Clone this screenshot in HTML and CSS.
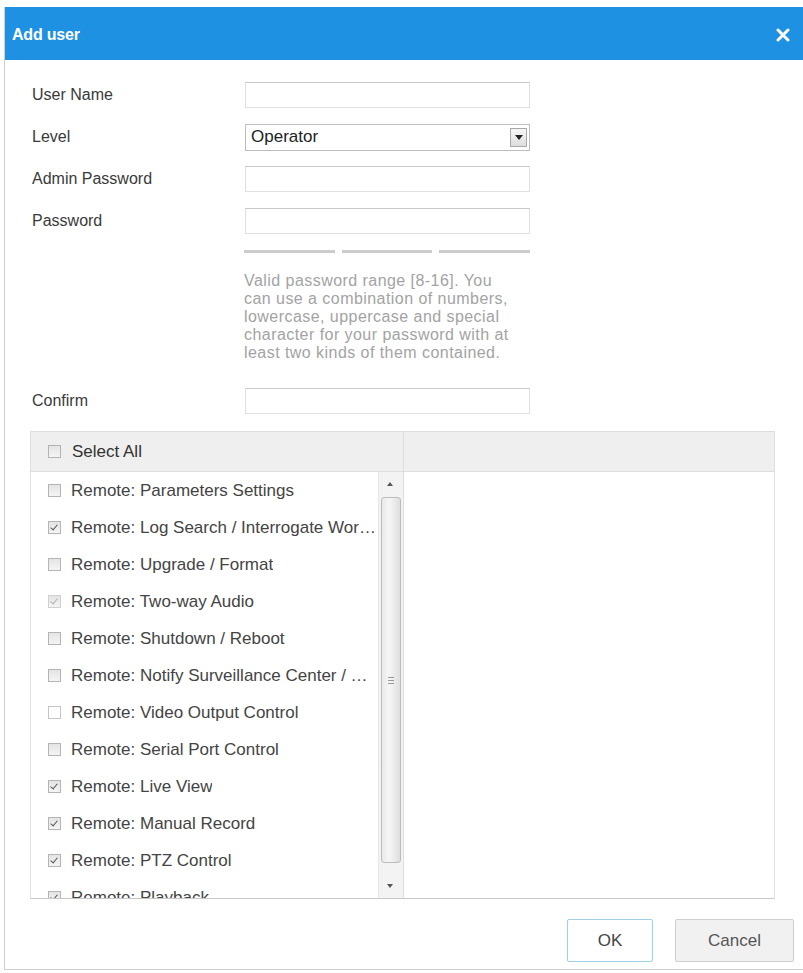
FILE: index.html
```html
<!DOCTYPE html>
<html lang="en">
<head>
    <meta charset="UTF-8">
    <meta name="viewport" content="width=device-width, initial-scale=1.0">
    <title>Add user</title>
    <link rel="stylesheet" href="styles.css">
</head>
<body>
    <div class="dialog">
        <div class="header">
            <span class="title">Add user</span>
            <svg class="close" width="14" height="14" viewBox="0 0 14 14">
                <path d="M2 2 L12 12 M12 2 L2 12" stroke="#fff" stroke-width="3" stroke-linecap="round"/>
            </svg>
        </div>

        <div class="form">
            <div class="row">
                <label>User Name</label>
                <div class="field"></div>
            </div>
            <div class="row">
                <label>Level</label>
                <div class="field select">
                    <span>Operator</span>
                    <span class="arrow"><svg width="8" height="5" viewBox="0 0 8 5"><path d="M0 0 H8 L4 5 Z" fill="#222"/></svg></span>
                </div>
            </div>
            <div class="row">
                <label>Admin Password</label>
                <div class="field"></div>
            </div>
            <div class="row">
                <label>Password</label>
                <div class="field"></div>
            </div>
            <div class="strength">
                <span></span><span></span><span></span>
            </div>
            <p class="hint">Valid password range [8-16]. You can use a combination of numbers, lowercase, uppercase and special character for your password with at least two kinds of them contained.</p>
            <div class="row">
                <label>Confirm</label>
                <div class="field"></div>
            </div>
        </div>

        <div class="perms">
            <div class="perms-head">
                <div class="head-left"><span class="cb"></span>Select All</div>
                <div class="head-right"></div>
            </div>
            <div class="perms-body">
                <div class="list-wrap">
                    <ul class="list">
                        <li><span class="cb"></span><span class="txt">Remote: Parameters Settings</span></li>
                        <li><span class="cb checked"></span><span class="txt">Remote: Log Search / Interrogate Working Status</span></li>
                        <li><span class="cb"></span><span class="txt">Remote: Upgrade / Format</span></li>
                        <li><span class="cb checked disabled"></span><span class="txt">Remote: Two-way Audio</span></li>
                        <li><span class="cb"></span><span class="txt">Remote: Shutdown / Reboot</span></li>
                        <li><span class="cb"></span><span class="txt">Remote: Notify Surveillance Center / Trigger Alarm Output</span></li>
                        <li><span class="cb blank"></span><span class="txt">Remote: Video Output Control</span></li>
                        <li><span class="cb"></span><span class="txt">Remote: Serial Port Control</span></li>
                        <li><span class="cb checked"></span><span class="txt">Remote: Live View</span></li>
                        <li><span class="cb checked"></span><span class="txt">Remote: Manual Record</span></li>
                        <li><span class="cb checked"></span><span class="txt">Remote: PTZ Control</span></li>
                        <li><span class="cb checked"></span><span class="txt">Remote: Playback</span></li>
                    </ul>
                    <div class="scrollbar">
                        <span class="sb-arrow up"></span>
                        <div class="thumb"><span class="grip"></span></div>
                        <span class="sb-arrow down"></span>
                    </div>
                </div>
                <div class="channels"></div>
            </div>
        </div>

        <div class="footer">
            <button class="btn ok">OK</button>
            <button class="btn cancel">Cancel</button>
        </div>
    </div>
</body>
</html>
```

FILE: styles.css
```css
body {
    margin: 0;
    font-family: "Liberation Sans", Arial, sans-serif;
    background: #fff;
    color: #333;
}
.dialog {
    margin: 7px 0 0 4px;
    height: 963px;
    box-sizing: border-box;
    border-left: 1px solid #cfcfcf;
    border-bottom: 1px solid #cfcfcf;
    display: flex;
    flex-direction: column;
}
.header {
    height: 53px;
    flex: none;
    background: #1e91e3;
    display: flex;
    align-items: center;
    justify-content: space-between;
    padding: 2px 13px 0 7px;
    box-sizing: border-box;
}
.title {
    color: #fff;
    font-weight: bold;
    font-size: 16px;
    letter-spacing: -0.2px;
}
.form {
    padding: 22px 0 0 27px;
}
.row {
    display: flex;
    align-items: center;
    height: 26px;
    margin-bottom: 16px;
}
.row label {
    width: 213px;
    font-size: 16px;
    color: #3a3a3a;
}
.field {
    width: 285px;
    height: 26px;
    box-sizing: border-box;
    border: 1px solid #e0e0e0;
    border-top-color: #c8c8c8;
    background: #fff;
}
.select {
    display: flex;
    align-items: center;
    justify-content: space-between;
    padding: 0 2px 0 5px;
    border-color: #bdbdbd;
    height: 27px;
    font-size: 17px;
    color: #222;
}
.arrow {
    width: 17px;
    height: 19px;
    box-sizing: border-box;
    border: 1px solid #a8a8a8;
    background: linear-gradient(#f6f6f6, #dedede);
    display: flex;
    align-items: center;
    justify-content: center;
}
.strength {
    display: flex;
    gap: 7px;
    width: 286px;
    margin: 6px 0 0 212px;
}
.strength span {
    flex: 1;
    height: 3px;
    background: #cccccc;
}
.hint {
    width: 274px;
    margin: 19px 0 26px 212px;
    font-size: 16px;
    line-height: 18px;
    letter-spacing: 0.45px;
    color: #a3a3a3;
}
.perms {
    margin: 1px 0 0 25px;
    width: 745px;
}
.perms-head {
    display: flex;
    height: 41px;
    box-sizing: border-box;
    background: #efefef;
    border: 1px solid #dedede;
}
.head-left {
    width: 373px;
    box-sizing: border-box;
    border-right: 1px solid #dedede;
    display: flex;
    align-items: center;
    padding-left: 17px;
    font-size: 17px;
    color: #333;
}
.head-right {
    flex: 1;
}
.perms-body {
    display: flex;
    height: 427px;
    box-sizing: border-box;
    border-left: 1px solid #e2e2e2;
    border-right: 1px solid #e2e2e2;
    border-bottom: 1px solid #c8c8c8;
}
.list-wrap {
    width: 372px;
    display: flex;
    border-right: 1px solid #dedede;
    overflow: hidden;
}
.list {
    list-style: none;
    margin: 0;
    padding: 0;
    width: 347px;
}
.list li {
    height: 37px;
    display: flex;
    align-items: center;
    padding-left: 17px;
    padding-right: 2px;
    font-size: 17px;
    color: #444;
}
.txt {
    min-width: 0;
    white-space: nowrap;
    overflow: hidden;
    text-overflow: ellipsis;
}
.cb {
    flex: none;
    width: 11px;
    height: 11px;
    margin-right: 10px;
    border: 1px solid #b4b4b4;
    background: linear-gradient(#e4e4e4, #f4f4f4);
    position: relative;
}
.cb.blank {
    background: #fff;
    border-color: #c6c6c6;
}
.cb.checked::after {
    content: "";
    position: absolute;
    left: 3px;
    top: 1px;
    width: 3px;
    height: 6px;
    border: solid #555;
    border-width: 0 1.5px 1.5px 0;
    transform: rotate(40deg);
}
.cb.disabled {
    border-color: #d0d0d0;
}
.cb.disabled::after {
    border-color: #b0b0b0;
}
.head-left .cb {
    margin-right: 11px;
}
.scrollbar {
    width: 24px;
    flex: none;
    background: #f3f3f3;
    border-left: 1px solid #e6e6e6;
    display: flex;
    flex-direction: column;
    align-items: center;
}
.sb-arrow {
    height: 25px;
    width: 100%;
    position: relative;
}
.sb-arrow::after {
    content: "";
    position: absolute;
    left: 8px;
    border-left: 3px solid transparent;
    border-right: 3px solid transparent;
}
.sb-arrow.up::after {
    top: 10px;
    border-bottom: 4px solid #555;
}
.sb-arrow.down::after {
    top: 11px;
    border-top: 4px solid #555;
}
.thumb {
    flex: 1;
    width: 20px;
    box-sizing: border-box;
    margin-bottom: 10px;
    border: 1px solid #bcbcbc;
    border-radius: 3px;
    background: linear-gradient(90deg, #e9e9e9, #f6f6f6 40%, #dedede);
    display: flex;
    align-items: center;
    justify-content: center;
}
.grip {
    width: 6px;
    height: 5px;
    border-top: 1px solid #999;
    border-bottom: 1px solid #999;
    position: relative;
}
.grip::after {
    content: "";
    position: absolute;
    left: 0;
    right: 0;
    top: 2px;
    border-top: 1px solid #999;
}
.channels {
    flex: 1;
}
.footer {
    display: flex;
    justify-content: flex-end;
    gap: 22px;
    padding: 20px 9px 0 0;
}
.btn {
    height: 43px;
    font-family: "Liberation Sans", Arial, sans-serif;
    font-size: 17px;
    color: #444;
    border-radius: 2px;
    cursor: pointer;
}
.ok {
    width: 86px;
    background: #fff;
    border: 1px solid #9fd0e3;
}
.cancel {
    width: 119px;
    background: #f1f1f1;
    border: 1px solid #cfcfcf;
    color: #555;
}
```
